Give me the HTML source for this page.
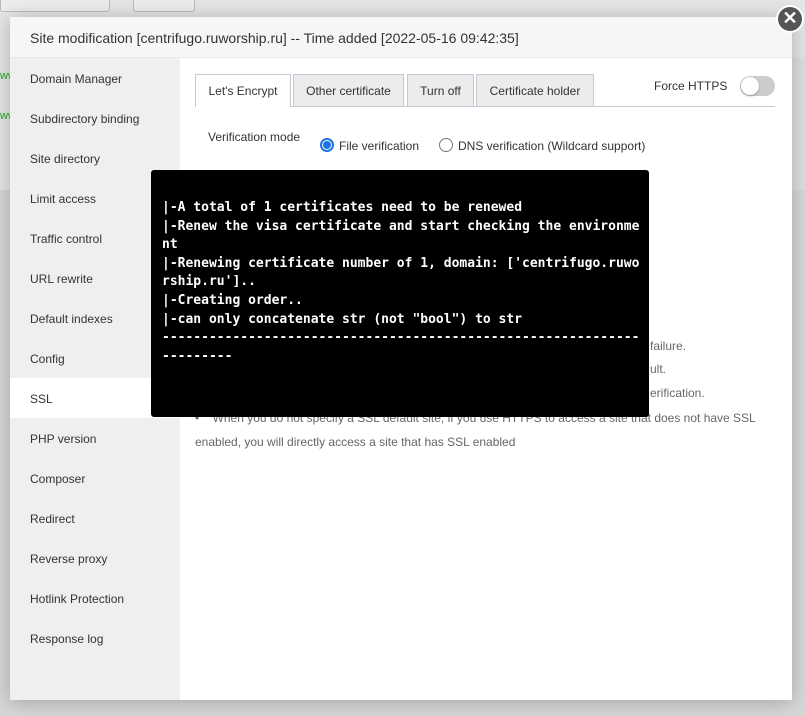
<!DOCTYPE html>
<html><head><meta charset="utf-8"><style>
body{margin:0;width:805px;height:716px;overflow:hidden;background:#d8d8d8;font-family:"Liberation Sans",sans-serif;position:relative}
.a{position:absolute}
.side div{position:absolute;left:0;width:170px;height:40px;line-height:42px;padding-left:20px;box-sizing:border-box;font-size:12px;color:#333}
.tab{position:absolute;top:74px;height:32px;line-height:33px;font-size:12px;color:#333;border:1px solid #c9c6d6;border-bottom:none;background:#ececec;text-align:center;box-sizing:border-box}
.term{position:absolute;left:151px;top:170px;width:498px;height:247px;background:#000;border-radius:3px;color:#fff;font-family:"DejaVu Sans Mono",monospace;font-weight:bold;font-size:13px;line-height:18.6px;padding:29px 10px 0 11px;box-sizing:border-box;white-space:pre;overflow:hidden}
.help{position:absolute;left:195px;font-size:12px;color:#666}
</style></head><body>
<div class="a" style="left:0;top:0;width:805px;height:190px;background:#e6e6e6"></div>
<div class="a" style="left:0;top:-10px;width:108px;height:20px;border:1px solid #bbb;border-radius:3px;background:#ededed"></div>
<div class="a" style="left:133px;top:-10px;width:60px;height:20px;border:1px solid #bbb;border-radius:3px;background:#ededed"></div>
<div class="a" style="left:790px;top:58px;width:15px;height:132px;background:#e0e0e0"></div>
<div class="a" style="left:0;top:70px;font-size:11px;color:#2a2">ww</div>
<div class="a" style="left:0;top:110px;font-size:11px;color:#2a2">ww</div>
<div class="a" style="left:10px;top:17px;width:782px;height:683px;background:#fff;box-shadow:0 2px 20px rgba(0,0,0,.25)"></div>
<div class="a" style="left:10px;top:17px;width:782px;height:41px;background:#f6f6f6;border-bottom:1px solid #e9e9e9;box-sizing:border-box"></div>
<div class="a" style="left:30px;top:30px;font-size:14px;color:#333">Site modification [centrifugo.ruworship.ru] -- Time added [2022-05-16 09:42:35]</div>
<div class="a" style="left:776px;top:5px;width:28px;height:28px;border-radius:50%;background:#fff"></div>
<div class="a" style="left:778px;top:7px;width:24px;height:24px;border-radius:50%;background:#555;color:#fff;text-align:center;line-height:23px;font-size:18px;font-weight:bold">✕</div>
<div class="a side" style="left:10px;top:58px;width:170px;height:642px;background:#efefef">
<div style="top:0">Domain Manager</div><div style="top:40px">Subdirectory binding</div><div style="top:80px">Site directory</div><div style="top:120px">Limit access</div><div style="top:160px">Traffic control</div><div style="top:200px">URL rewrite</div><div style="top:240px">Default indexes</div><div style="top:280px">Config</div><div style="top:320px;background:#fff">SSL</div><div style="top:360px">PHP version</div><div style="top:400px">Composer</div><div style="top:440px">Redirect</div><div style="top:480px">Reverse proxy</div><div style="top:520px">Hotlink Protection</div><div style="top:560px">Response log</div>
</div>
<div class="a" style="left:195px;top:106px;width:580px;height:1px;background:#c9c6d6"></div>
<div class="tab" style="left:195px;width:96px;background:#fff;height:33px">Let's Encrypt</div>
<div class="tab" style="left:293px;width:111px">Other certificate</div>
<div class="tab" style="left:407px;width:67px">Turn off</div>
<div class="tab" style="left:476px;width:118px">Certificate holder</div>
<div class="a" style="left:654px;top:79px;font-size:12px;color:#333">Force HTTPS</div>
<div class="a" style="left:740px;top:76px;width:35px;height:20px;border-radius:10px;background:#ccc"></div>
<div class="a" style="left:741px;top:77px;width:18px;height:18px;border-radius:50%;background:#fff;box-shadow:0 1px 2px rgba(0,0,0,.3)"></div>
<div class="a" style="left:208px;top:130px;font-size:12px;color:#333">Verification mode</div>
<div class="a" style="left:320px;top:138px;width:10px;height:10px;border-radius:50%;border:2px solid #1a73e8;background:#fff"></div>
<div class="a" style="left:323px;top:141px;width:8px;height:8px;border-radius:50%;background:#1a73e8"></div>
<div class="a" style="left:339px;top:139px;font-size:12px;color:#333">File verification</div>
<div class="a" style="left:439px;top:138px;width:12px;height:12px;border-radius:50%;border:1px solid #767676;background:#fff"></div>
<div class="a" style="left:458px;top:139px;font-size:12px;color:#333">DNS verification (Wildcard support)</div>
<div class="help" style="top:339px;left:650px">failure.</div>
<div class="help" style="top:362px;left:650px">ult.</div>
<div class="help" style="top:386px;left:650px">erification.</div>
<div class="help" style="top:411px">•&nbsp;&nbsp;&nbsp; When you do not specify a SSL default site, if you use HTTPS to access a site that does not have SSL</div>
<div class="help" style="top:435px">enabled, you will directly access a site that has SSL enabled</div>
<div class="term">|-A total of 1 certificates need to be renewed
|-Renew the visa certificate and start checking the environme
nt
|-Renewing certificate number of 1, domain: ['centrifugo.ruwo
rship.ru']..
|-Creating order..
|-can only concatenate str (not "bool") to str
-------------------------------------------------------------
---------</div>
</body></html>
